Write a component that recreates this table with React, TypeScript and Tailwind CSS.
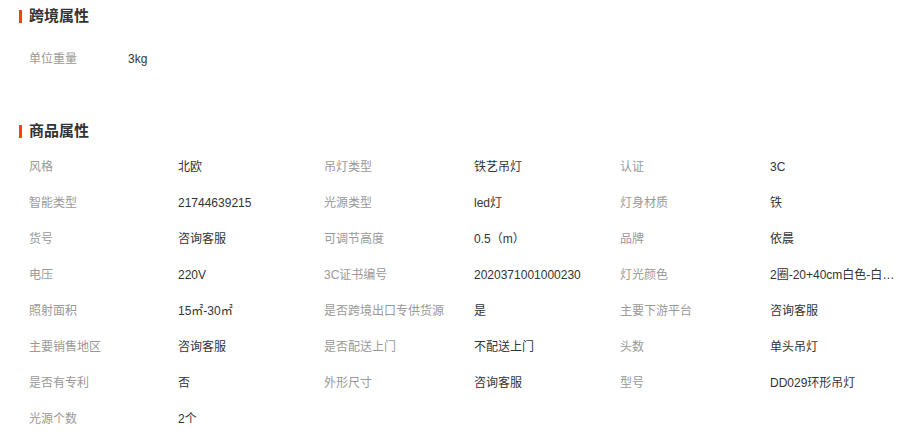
const crossBorder = [["单位重量", "3kg"]];

const props: [string, string][] = [
  ["风格", "北欧"],
  ["吊灯类型", "铁艺吊灯"],
  ["认证", "3C"],
  ["智能类型", "21744639215"],
  ["光源类型", "led灯"],
  ["灯身材质", "铁"],
  ["货号", "咨询客服"],
  ["可调节高度", "0.5（m）"],
  ["品牌", "依晨"],
  ["电压", "220V"],
  ["3C证书编号", "2020371001000230"],
  ["灯光颜色", "2圈-20+40cm白色-白光-无极调光"],
  ["照射面积", "15㎡-30㎡"],
  ["是否跨境出口专供货源", "是"],
  ["主要下游平台", "咨询客服"],
  ["主要销售地区", "咨询客服"],
  ["是否配送上门", "不配送上门"],
  ["头数", "单头吊灯"],
  ["是否有专利", "否"],
  ["外形尺寸", "咨询客服"],
  ["型号", "DD029环形吊灯"],
  ["光源个数", "2个"],
];

function SectionTitle({ title }: { title: string }) {
  return (
    <div className="flex items-center h-5 pl-[19px]">
      <span className="w-[3px] h-[13px] bg-[#ff4400]" />
      <span className="ml-[7px] text-[15px] font-bold text-[#333]">{title}</span>
    </div>
  );
}

export default function App() {
  return (
    <div
      className="w-[899px] h-[436px] overflow-hidden bg-white text-xs"
      style={{ fontFamily: '"Liberation Sans", "Noto Sans CJK SC", sans-serif' }}
    >
      <div className="pt-[6px]">
        <SectionTitle title="跨境属性" />
      </div>
      <div className="mt-[15px] pl-[29px]">
        {crossBorder.map(([k, v]) => (
          <div key={k} className="flex items-center h-9">
            <span className="w-[99px] text-[#999]">{k}</span>
            <span className="text-[#333]">{v}</span>
          </div>
        ))}
      </div>
      <div className="mt-[44px]">
        <SectionTitle title="商品属性" />
      </div>
      <div className="mt-[8px] pl-[29px] grid grid-cols-[149px_146px_150px_146px_150px_128px]">
        {props.map(([k, v]) => (
          <div key={k} className="contents">
            <div className="h-9 flex items-center text-[#999] whitespace-nowrap">{k}</div>
            <div className="h-9 flex items-center text-[#333] min-w-0">
              <span className="truncate">{v}</span>
            </div>
          </div>
        ))}
      </div>
    </div>
  );
}
